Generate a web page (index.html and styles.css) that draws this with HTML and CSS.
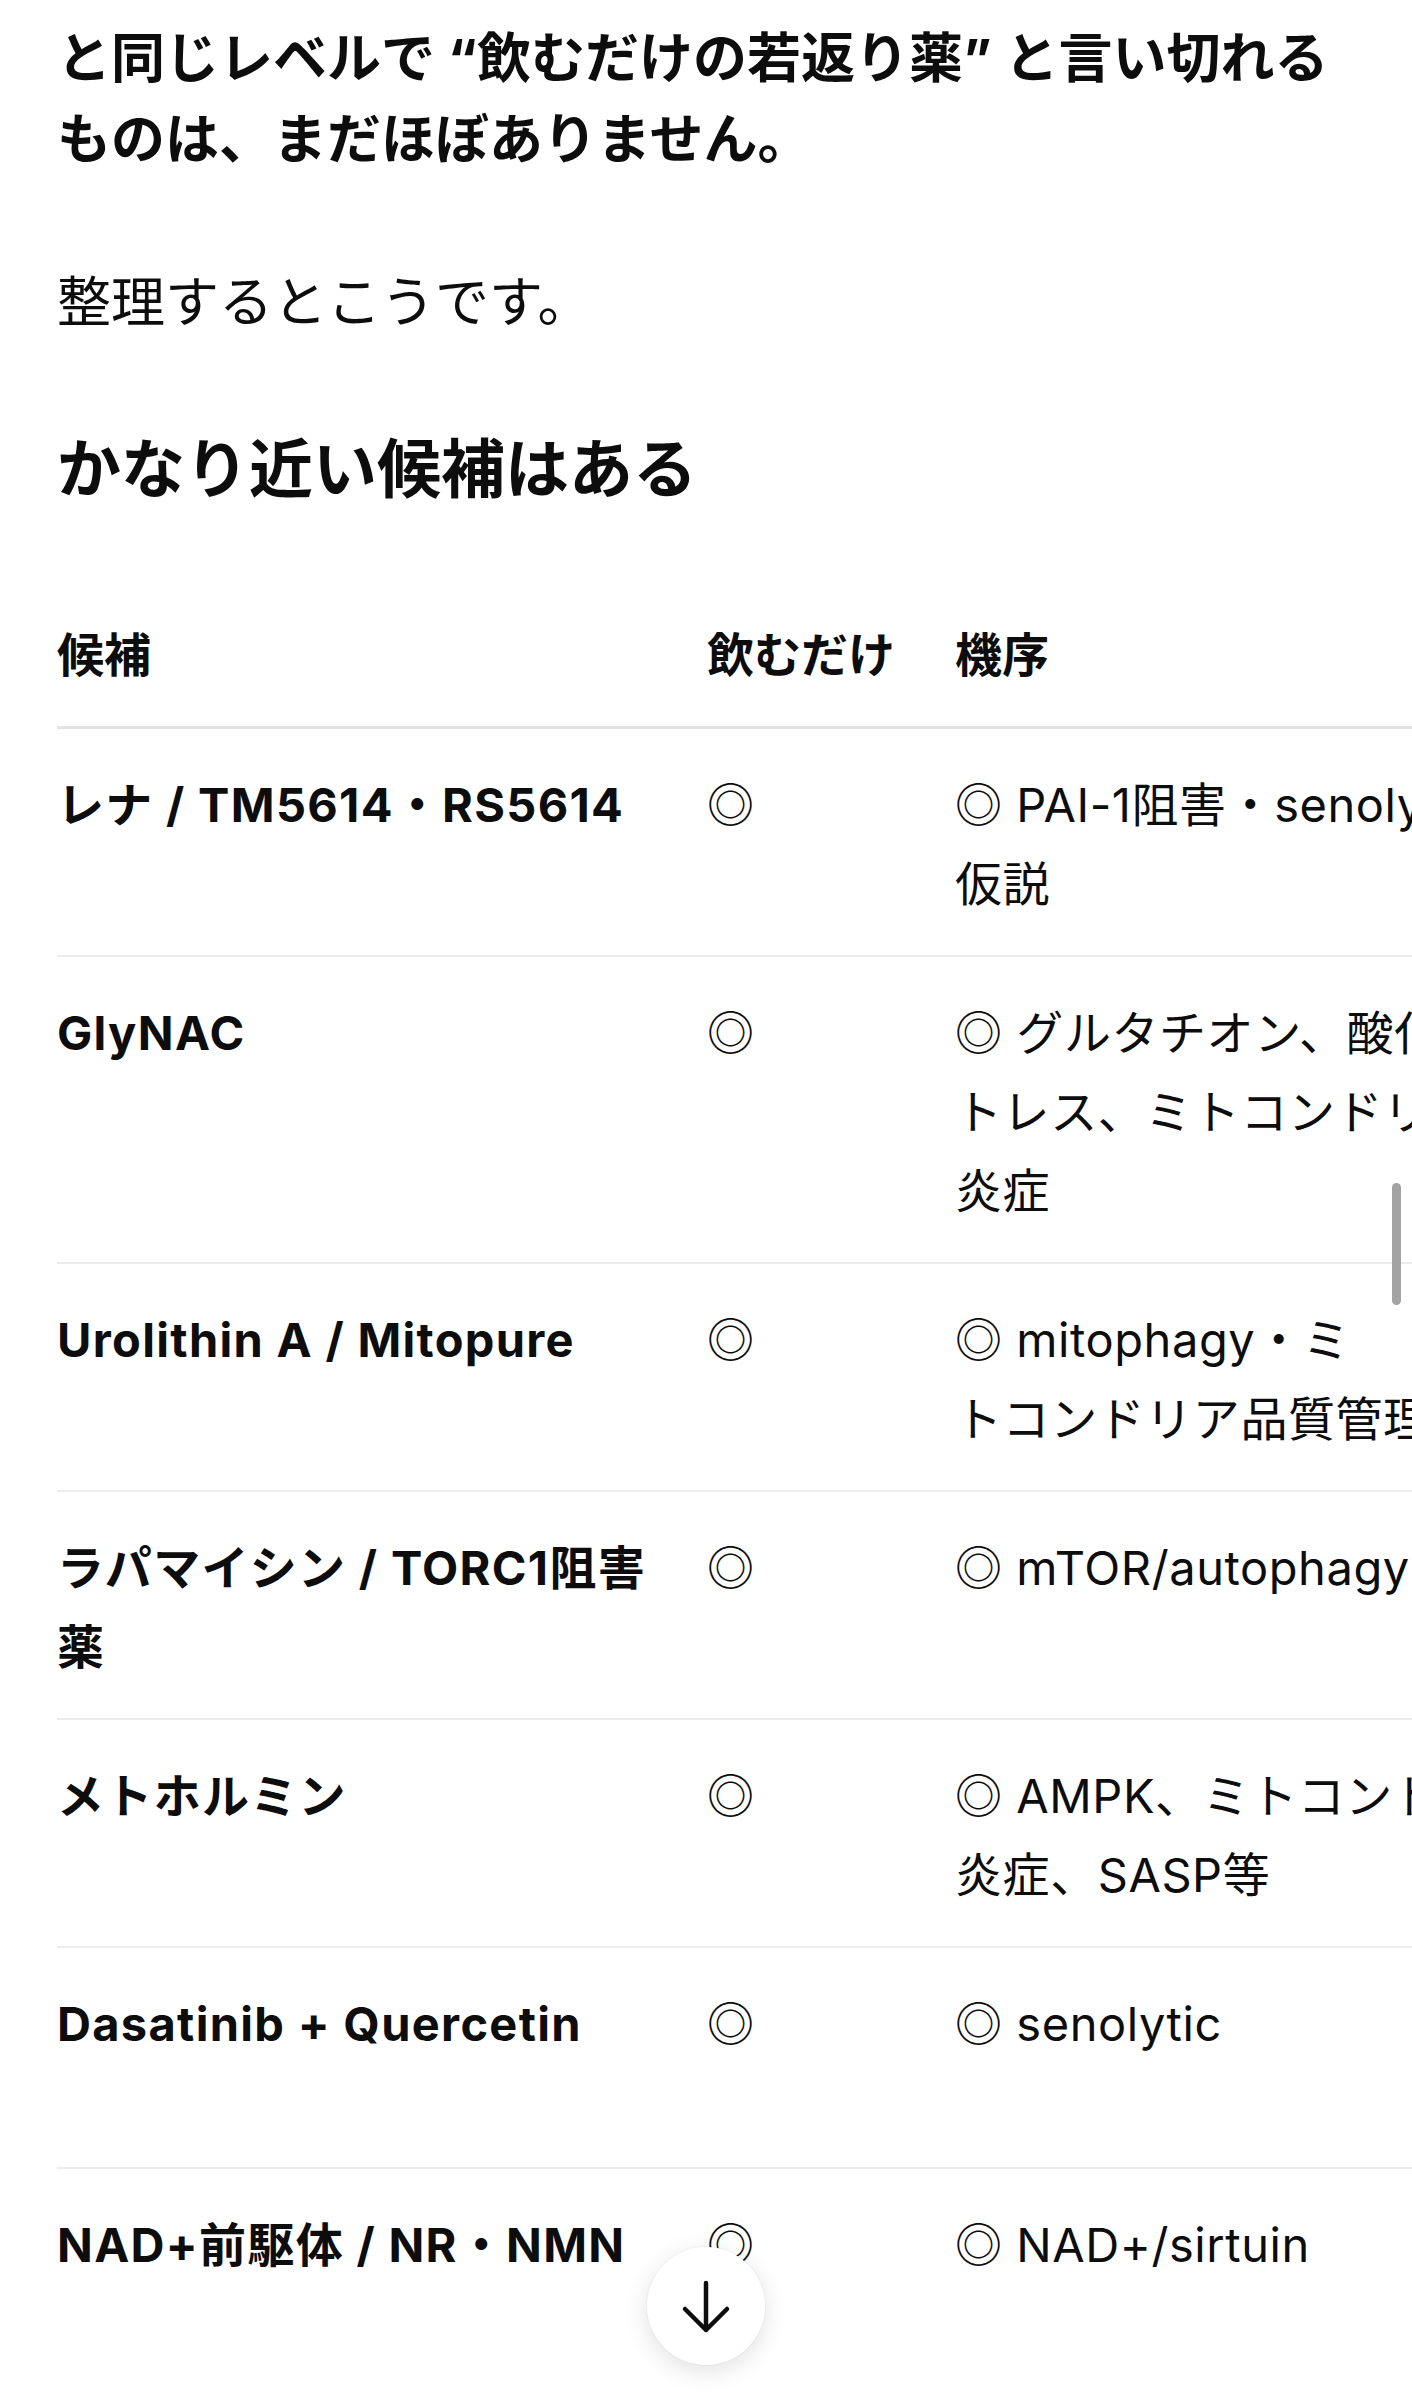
FILE: index.html
```html
<!DOCTYPE html>
<html lang="ja">
<head>
  <meta charset="UTF-8" />
  <title>かなり近い候補はある</title>
  <meta name="viewport" content="width=device-width, initial-scale=1.0"/>
  <link rel="stylesheet" href="styles.css">
</head>
<body>

  <div class="thread">
    <p><strong>と同じレベルで “飲むだけの若返り薬” と言い切れるものは、まだほぼありません。</strong></p>
    <p>整理するとこうです。</p>

    <h3>かなり近い候補はある</h3>

    <div class="table-wrap">
      <table class="cands">
        <colgroup>
          <col class="c-name">
          <col class="c-drink">
          <col class="c-mech">
        </colgroup>
        <thead>
          <tr><th>候補</th><th>飲むだけ</th><th>機序</th></tr>
        </thead>
        <tbody>
          <tr>
            <td class="name">レナ / TM5614・RS5614</td>
            <td>◎</td>
            <td class="mech">◎ PAI-1阻害・senolytic<br>仮説</td>
          </tr>
          <tr>
            <td class="name">GlyNAC</td>
            <td>◎</td>
            <td class="mech">◎ グルタチオン、酸化ス<br>トレス、ミトコンドリア、<br>炎症</td>
          </tr>
          <tr>
            <td class="name">Urolithin A / Mitopure</td>
            <td>◎</td>
            <td class="mech">◎ mitophagy・ミ<br>トコンドリア品質管理</td>
          </tr>
          <tr>
            <td class="name">ラパマイシン / TORC1阻害薬</td>
            <td>◎</td>
            <td class="mech">◎ mTOR/autophagy</td>
          </tr>
          <tr>
            <td class="name">メトホルミン</td>
            <td>◎</td>
            <td class="mech">◎ AMPK、ミトコンドリア、<br>炎症、SASP等</td>
          </tr>
          <tr class="row-mid">
            <td class="name">Dasatinib + Quercetin</td>
            <td>◎</td>
            <td class="mech">◎ senolytic</td>
          </tr>
          <tr class="row-last">
            <td class="name">NAD+前駆体 / NR・NMN</td>
            <td>◎</td>
            <td class="mech">◎ NAD+/sirtuin</td>
          </tr>
        </tbody>
      </table>
    </div>
  </div>

  <div class="scroll-thumb"></div>

  <button class="jump-down" aria-label="下へスクロール">
    <svg width="118" height="118" viewBox="0 0 118 118" fill="none">
      <path d="M59 36V83M38 62L59 83L80 62" stroke="#0d0d0d" stroke-width="4.5" stroke-linecap="round" stroke-linejoin="round"/>
    </svg>
  </button>

</body>
</html>
```

FILE: styles.css
```css
body {
  margin: 0;
  background: #fff;
  color: #0d0d0d;
  font-family: Inter, "Noto Sans CJK JP", sans-serif;
  overflow: hidden;
}

.thread {
  padding: 18px 57px 0;
}

p {
  margin: 0;
  font-size: 54px;
  line-height: 81px;
}
p + p {
  margin-top: 82px;
}
strong {
  font-weight: 700;
}

h3 {
  margin: 84px 0 0;
  font-size: 64px;
  line-height: 84px;
  font-weight: 700;
}

.table-wrap {
  margin: 68px -57px 0 0;
  overflow: hidden;
}

.cands {
  border-collapse: collapse;
  table-layout: fixed;
  width: 1700px;
  font-size: 47px;
  line-height: 79px;
  letter-spacing: 0.012em;
}
.c-name { width: 650px; }
.c-drink { width: 248px; }

.cands th,
.cands td {
  text-align: left;
  vertical-align: top;
  padding: 36px 40px 32px 0;
}
.cands th {
  font-weight: 700;
  letter-spacing: 0;
  border-bottom: 3px solid #e3e3e3;
}
.cands td {
  border-bottom: 2px solid #ececec;
}
.cands td.name {
  font-weight: 700;
  letter-spacing: 0.028em;
}
.cands td.mech {
  white-space: nowrap;
}
.row-mid td {
  box-sizing: border-box;
  height: 221px;
}
.row-last td {
  box-sizing: border-box;
  height: 320px;
}

.scroll-thumb {
  position: fixed;
  top: 1183px;
  right: 11px;
  width: 9px;
  height: 122px;
  border-radius: 5px;
  background: #a3a3a3;
}

.jump-down {
  position: fixed;
  left: 50%;
  bottom: 35px;
  width: 118px;
  height: 118px;
  margin-left: -59px;
  padding: 0;
  border: none;
  border-radius: 50%;
  background: #fff;
  box-shadow: 0 6px 24px rgba(0,0,0,0.12), 0 0 0 1px rgba(0,0,0,0.03);
  display: flex;
  align-items: center;
  justify-content: center;
}
```
